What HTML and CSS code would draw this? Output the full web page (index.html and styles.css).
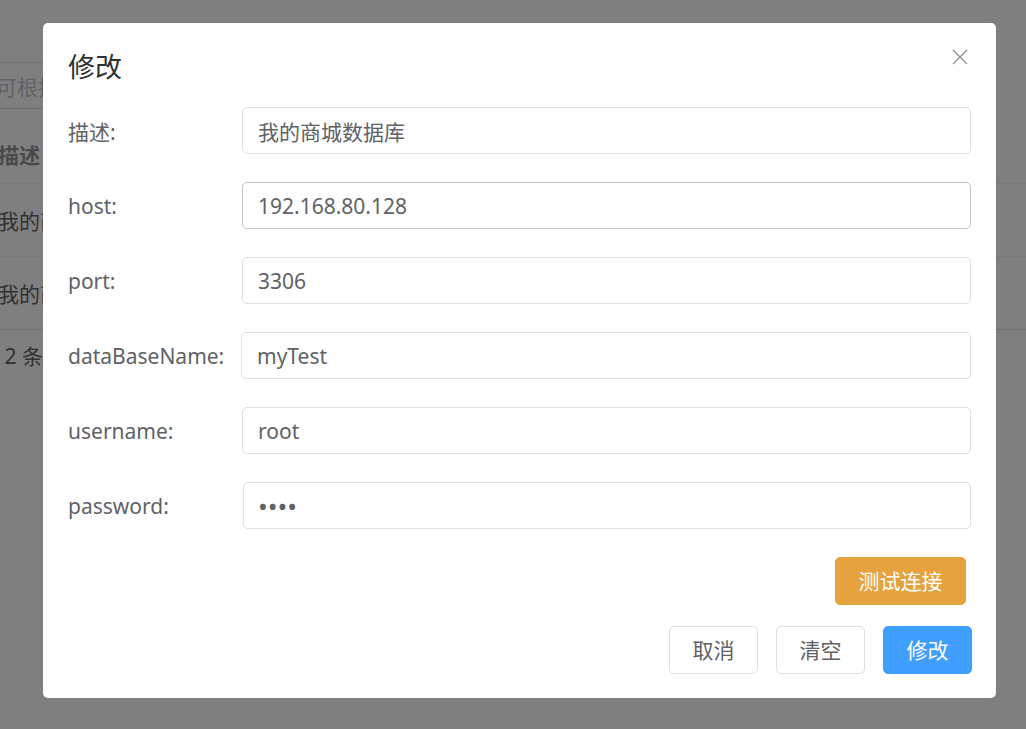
FILE: index.html
```html
<!DOCTYPE html>
<html lang="zh-CN">
<head>
<meta charset="utf-8">
<title>修改</title>
<link rel="stylesheet" href="styles.css">
</head>
<body>
<div class="page">
  <div class="search"><span class="placeholder">可根据描述搜索</span></div>
  <div class="table">
    <div class="tr th"><span class="cell">描述</span></div>
    <div class="tr"><span class="cell">我的商城数据库</span></div>
    <div class="tr last"><span class="cell">我的商城数据库</span></div>
  </div>
  <div class="pager">共 2 条</div>
</div>
<div class="overlay"></div>
<div class="dialog">
  <div class="dlg-header">
    <span class="dlg-title">修改</span>
    <button class="dlg-close" aria-label="关闭">
      <svg width="16" height="16" viewBox="0 0 16 16"><path d="M1 1 L15 15 M15 1 L1 15" stroke="#909399" stroke-width="1.4" fill="none"/></svg>
    </button>
  </div>
  <div class="form">
    <label class="lbl">描述:</label>
    <input class="field" value="我的商城数据库">
    <label class="lbl">host:</label>
    <input class="field hover" value="192.168.80.128">
    <label class="lbl">port:</label>
    <input class="field" value="3306">
    <label class="lbl">dataBaseName:</label>
    <input class="field shift-l" value="myTest">
    <label class="lbl">username:</label>
    <input class="field" value="root">
    <label class="lbl">password:</label>
    <input class="field shift-r pwd" type="password" value="1234">
  </div>
  <div class="test-row">
    <button class="btn warning">测试连接</button>
  </div>
  <div class="footer">
    <button class="btn">取消</button>
    <button class="btn">清空</button>
    <button class="btn primary">修改</button>
  </div>
</div>
</body>
</html>
```
FILE: styles.css
```css
html, body {
  margin: 0;
  padding: 0;
  width: 1026px;
  height: 729px;
  overflow: hidden;
  background: #fff;
  font-family: "Noto Sans", "Noto Sans CJK SC", sans-serif;
}

.page {
  padding-top: 62px;
  color: #606266;
  font-size: 21px;
}

.search {
  margin-left: -20px;
  width: 300px;
  height: 47px;
  box-sizing: border-box;
  border: 1px solid #dcdfe6;
  border-radius: 5px;
  padding: 0 15px;
  display: flex;
  align-items: center;
}
.placeholder { color: #c0c4cc; white-space: nowrap; }

.table { margin-top: 17px; }
.tr {
  height: 73px;
  box-sizing: border-box;
  border-bottom: 1px solid #ebeef5;
  display: flex;
  align-items: center;
  margin-left: -2px;
}
.tr.th { height: 58px; align-items: flex-end; padding-bottom: 14px; color: #909399; font-weight: bold; }
.tr.last { border-bottom-color: #dcdfe6; }
.cell { white-space: nowrap; }

.pager { margin-left: -22px; margin-top: 10px; white-space: nowrap; }

.overlay {
  position: fixed;
  inset: 0;
  background: rgba(0, 0, 0, 0.5);
}

.dialog {
  position: fixed;
  left: 43px;
  top: 23px;
  width: 953px;
  box-sizing: border-box;
  background: #fff;
  border-radius: 5px;
  padding: 23px 25px 24px 25px;
  display: flex;
  flex-direction: column;
}

.dlg-header {
  height: 36px;
  display: flex;
  justify-content: space-between;
  align-items: flex-start;
}
.dlg-title {
  font-size: 27px;
  line-height: 36px;
  margin-top: 3px;
  color: #303133;
}
.dlg-close {
  border: 0;
  background: none;
  padding: 0;
  width: 16px;
  height: 16px;
  margin-right: 3px;
  margin-top: 3px;
  display: flex;
}

.form {
  margin-top: 25px;
  display: grid;
  grid-template-columns: 174px 1fr;
  row-gap: 28px;
  align-items: center;
}
.lbl {
  font-size: 21px;
  color: #606266;
  white-space: nowrap;
}
.field {
  height: 47px;
  width: 100%;
  box-sizing: border-box;
  border: 1px solid #dcdfe6;
  border-radius: 5px;
  padding: 0 15px;
  font: inherit;
  font-size: 21px;
  color: #606266;
  background: #fff;
  outline: none;
}
.field.hover { border-color: #c0c4cc; }
.field.shift-l { margin-left: -1px; width: calc(100% + 1px); }
.field.shift-r { margin-left: 1px; width: calc(100% - 1px); }
.field.pwd { font-size: 26px; padding-left: 14px; }

.test-row {
  margin-top: 28px;
  display: flex;
  justify-content: flex-end;
  padding-right: 5px;
}
.footer {
  margin-top: 21px;
  margin-right: -1px;
  display: flex;
  justify-content: flex-end;
  gap: 18px;
}

.btn {
  height: 48px;
  box-sizing: border-box;
  padding: 0 22.5px;
  border: 1px solid #dcdfe6;
  border-radius: 5px;
  background: #fff;
  color: #606266;
  font: inherit;
  font-size: 21px;
  line-height: 1;
}
.btn.warning { background: #e6a23c; border-color: #e6a23c; color: #fff; }
.btn.primary { background: #409eff; border-color: #409eff; color: #fff; }
```
